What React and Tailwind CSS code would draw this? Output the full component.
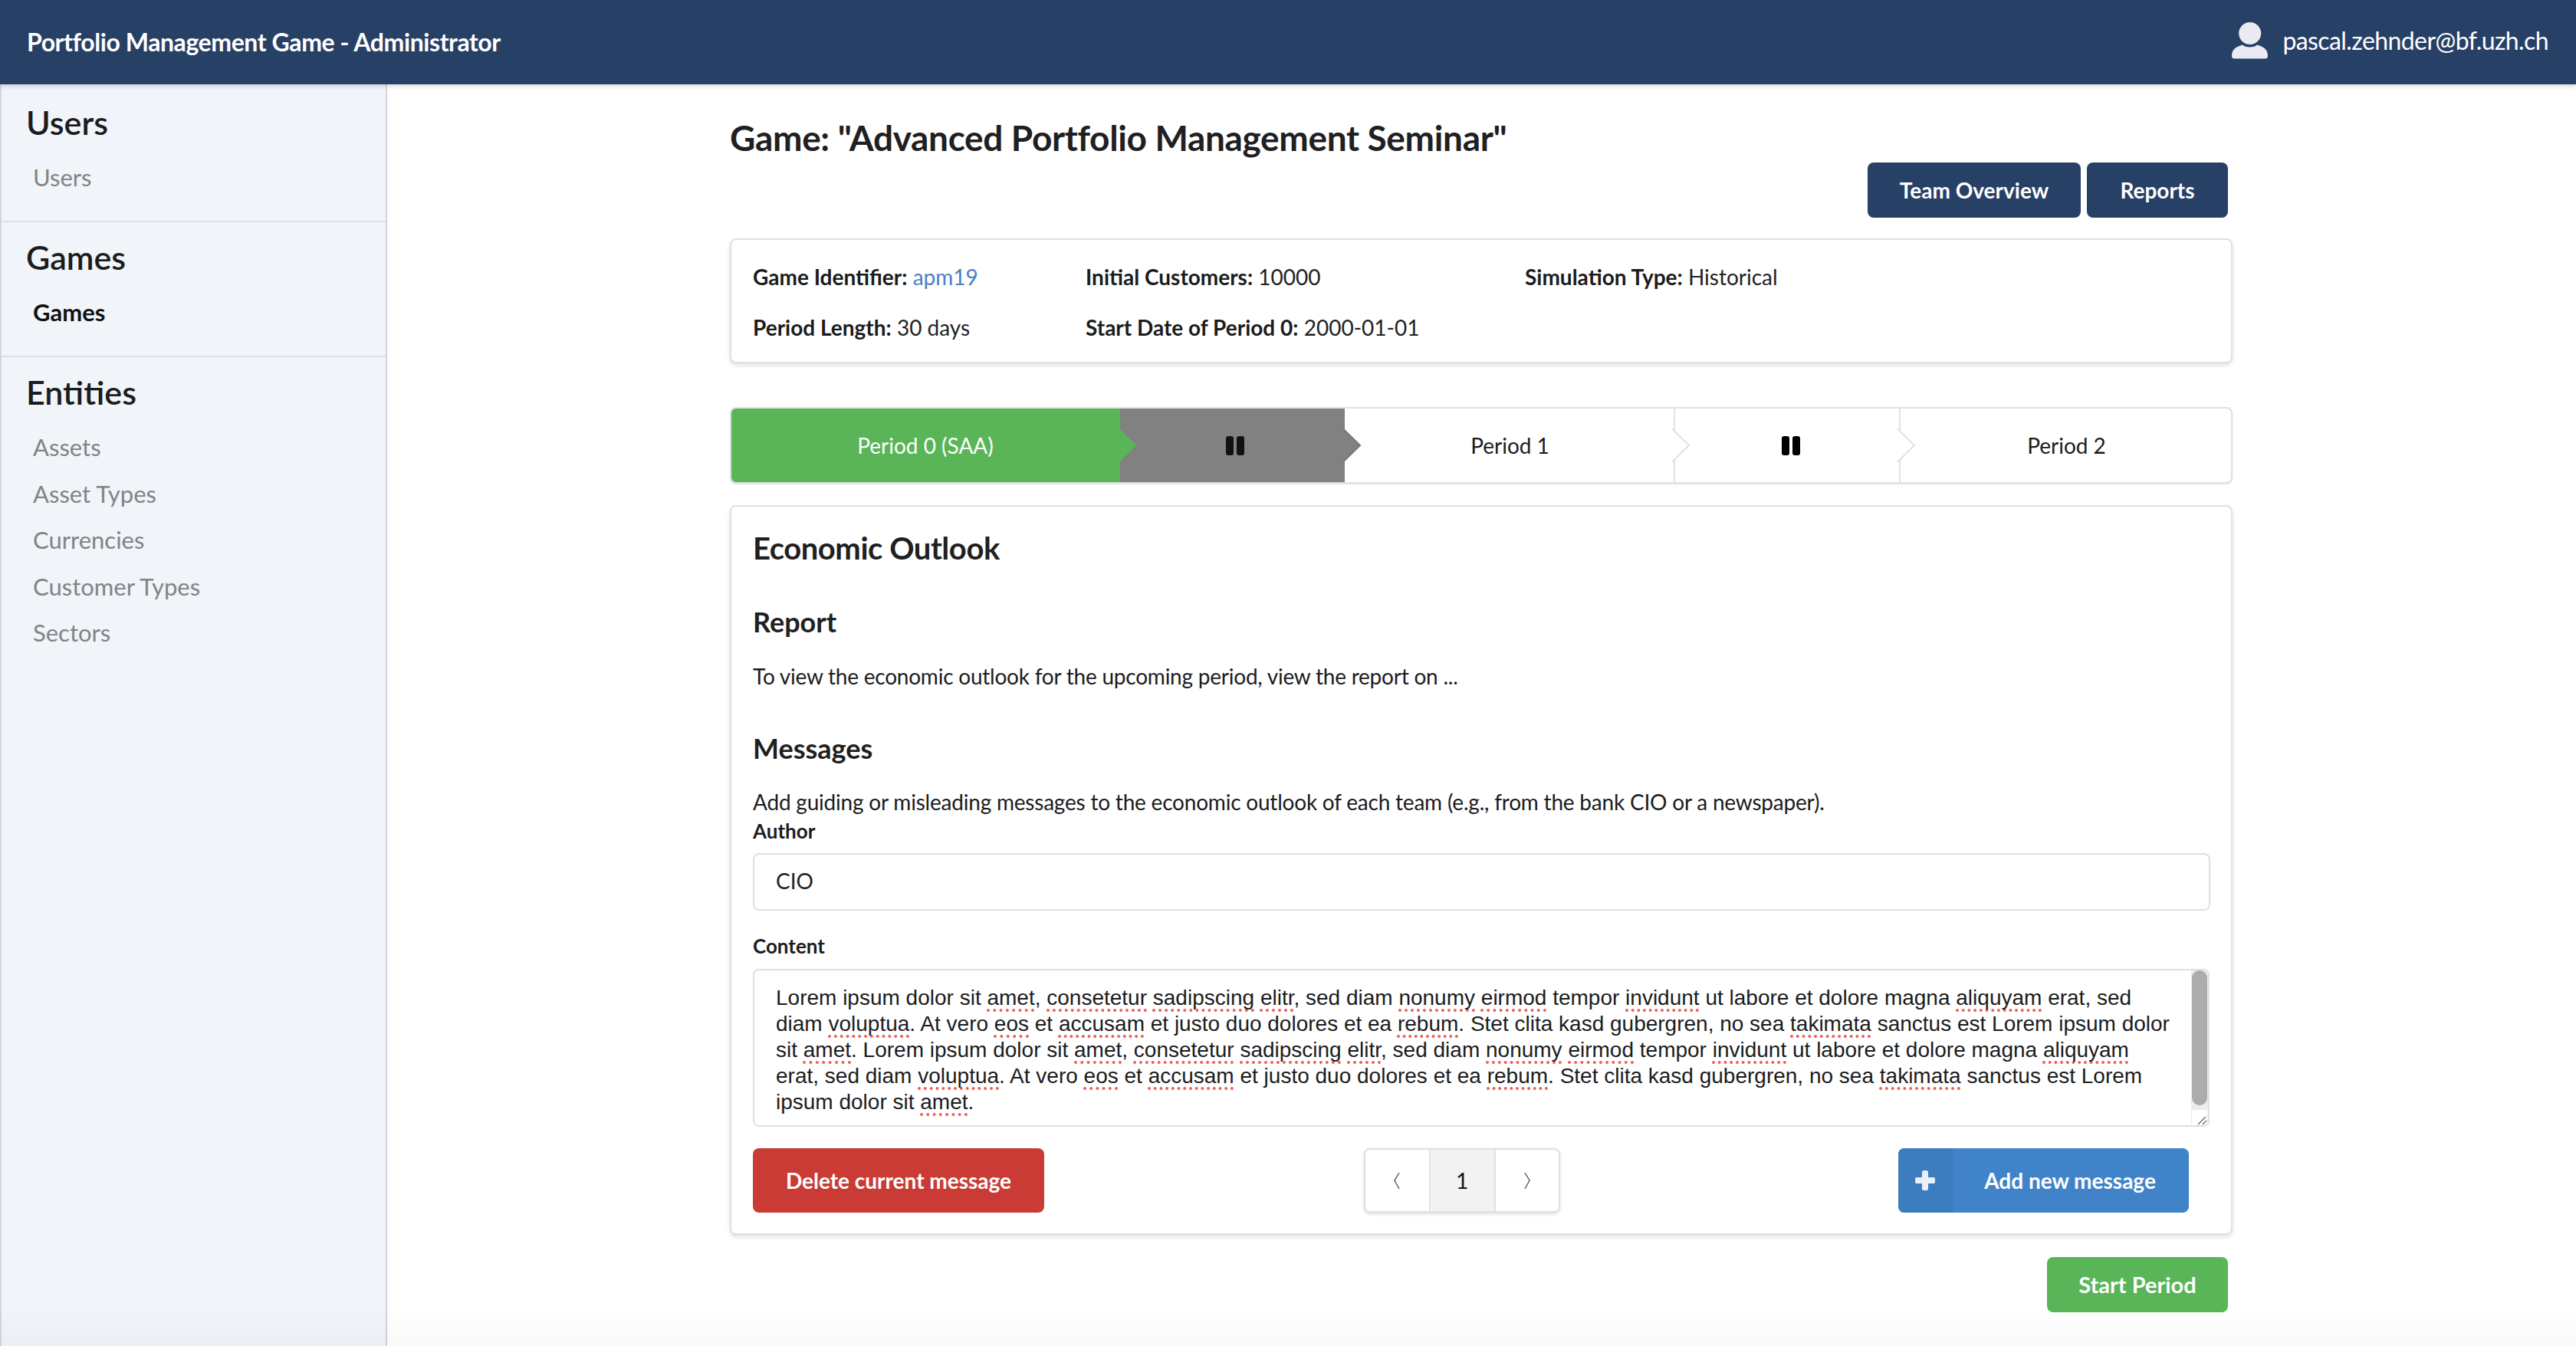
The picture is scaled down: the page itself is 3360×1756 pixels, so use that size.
const lato = "[font-family:Lato,sans-serif]";
function Err({ children }) {
  return <span className="underline decoration-dotted decoration-[#ee5f58] decoration-[4px] underline-offset-[5px] [text-decoration-skip-ink:none]">{children}</span>;
}
function NavGroup({ title, items, active, border = true, first = false }) {
  return (
    <div className={`px-[32px] ${first ? "pt-[22px]" : "pt-[18px]"} ${border ? "border-b-2 border-[#dcdfe4]" : ""}`}>
      <div className="text-[43px] leading-[56px] font-semibold text-[#1b1c1d]">{title}</div>
      <div className="flex flex-col pt-[13px] pb-[26.5px]">
        {items.map((it) => (
          <div key={it} className={`pl-[9px] text-[31px] leading-[60.5px] ${active ? "font-bold text-[#111]" : "text-[#808487]"}`}>{it}</div>
        ))}
      </div>
    </div>
  );
}
function Pause({ color }) {
  return (
    <svg width="24" height="25" viewBox="0 0 24 25"><rect x="0" y="0" width="10" height="25" rx="3" fill={color} /><rect x="14" y="0" width="10" height="25" rx="3" fill={color} /></svg>
  );
}
function Step({ className, children, stroke, tipFill, line }) {
  return (
    <div className={`relative flex items-center justify-center h-full ${line ? "border-r-2 border-[#e2e2e2]" : ""} ${className}`}>
      {children}
      {tipFill && (
        <svg className="absolute left-full top-1/2 -translate-y-1/2 -ml-[3px] z-10" width="26" height="46" viewBox="0 0 26 46">
          <polygon points="0,2 2,2 23,23 2,44 0,44" fill={tipFill} />
          <polyline points="1,1.5 23,23 1,44.5" fill="none" stroke={stroke} strokeWidth="2" />
        </svg>
      )}
    </div>
  );
}
const Card = ({ className, children }) => (
  <div className={`rounded-[8px] border-2 border-[#e0e0e1] bg-white shadow-[0_3px_5px_0_rgba(34,36,38,0.13)] ${className}`}>{children}</div>
);
const Kv = ({ k, children }) => (
  <div className="text-[28px] leading-[40px] text-[#222] whitespace-nowrap"><b className="font-bold text-[#1b1c1d]">{k}</b> {children}</div>
);

export default function App() {
  return (
    <div className={`${lato} h-[1756px] w-full overflow-hidden flex flex-col bg-white relative text-[#1b1c1d]`}>
      <header className="h-[110px] shrink-0 bg-[#274066] flex items-center justify-between pl-[35px] pr-[36px] text-white shadow-[0_2px_6px_rgba(34,36,38,0.2)] relative z-20">
        <div className="text-[32px] font-bold leading-[44px] tracking-[-0.42px]">Portfolio Management Game - Administrator</div>
        <div className="flex items-center gap-[19px]">
          <svg width="47" height="48" viewBox="0 0 47 48" fill="#e9ebf0" className="-mt-[4px]">
            <circle cx="23.7" cy="14.5" r="14.5" />
            <path d="M0 44C0 35 6 32 14 29.5C17 33.5 30 33.5 33 29.5C41 32 47 35 47 44Q47 47.5 43.5 47.5H3.5Q0 47.5 0 44Z" />
          </svg>
          <div className="text-[32px] leading-[44px] mb-[5px] tracking-[-0.58px]">pascal.zehnder@bf.uzh.ch</div>
        </div>
      </header>
      <div className="flex flex-1 min-h-0">
        <aside className="w-[505px] shrink-0 bg-[#f1f4f9] border-l-2 border-r-2 border-[#d2d5db]">
          <NavGroup title="Users" items={["Users"]} first />
          <NavGroup title="Games" items={["Games"]} active />
          <NavGroup title="Entities" items={["Assets", "Asset Types", "Currencies", "Customer Types", "Sectors"]} border={false} />
        </aside>
        <main className="ml-[447px] w-[1960px] shrink-0 pt-[39px]">
          <h1 className="text-[46px] leading-[62px] font-bold text-[#1f2021] tracking-[-0.35px]">Game: "Advanced Portfolio Management Seminar"</h1>
          <div className="flex justify-end gap-[8px] pr-[6px] pt-[1px]">
            <button className="h-[72px] w-[278px] rounded-[8px] bg-[#274066] text-white text-[28px] font-bold">Team Overview</button>
            <button className="h-[72px] w-[184px] rounded-[8px] bg-[#274066] text-white text-[28px] font-bold">Reports</button>
          </div>
          <Card className="mt-[27px] h-[163px] px-[28px] pt-[28px]">
            <div className="grid grid-cols-[434px_573px_1fr] gap-y-[26px]">
              <Kv k="Game Identifier:"><span className="text-[#4a7fc4]">apm19</span></Kv>
              <Kv k="Initial Customers:">10000</Kv>
              <Kv k="Simulation Type:">Historical</Kv>
              <Kv k="Period Length:">30 days</Kv>
              <Kv k="Start Date of Period 0:">2000-01-01</Kv>
            </div>
          </Card>
          <div className="mt-[57px] h-[100px] rounded-[8px] border-2 border-[#e0e0e1] flex text-[28px] bg-white shadow-[0_1px_2px_rgba(34,36,38,0.12)]">
            <Step className="w-[507px] bg-[#59b557] text-white rounded-l-[6px]" tipFill="#59b557" stroke="#59b557"><span className="-mt-[1px] -ml-[1px]">Period 0 (SAA)</span></Step>
            <Step className="w-[293px] bg-[#818181] pl-[6px]" tipFill="#818181" stroke="#777"><Pause color="#111" /></Step>
            <Step className="w-[431px] pl-[2px] text-[#1b1c1d]" tipFill="#fff" stroke="#e2e2e2" line><span>Period 1</span></Step>
            <Step className="w-[294px] pl-[10px]" tipFill="#fff" stroke="#e2e2e2" line><Pause color="#000" /></Step>
            <Step className="w-[431px] pl-[2px] text-[#1b1c1d]"><span>Period 2</span></Step>
          </div>
          <Card className="mt-[28px] h-[952px] pl-[28px] pr-[27px] pt-[26px]">
            <h2 className="text-[40px] leading-[56px] font-bold text-[#1f2021] tracking-[-0.45px]">Economic Outlook</h2>
            <h3 className="mt-[43px] text-[36px] leading-[50px] font-bold text-[#1f2021]">Report</h3>
            <p className="mt-[26px] text-[28px] leading-[40px] tracking-[-0.23px]">To view the economic outlook for the upcoming period, view the report on ...</p>
            <h3 className="mt-[49px] text-[36px] leading-[50px] font-bold text-[#1f2021]">Messages</h3>
            <p className="mt-[25px] text-[28px] leading-[40px] tracking-[-0.21px]">Add guiding or misleading messages to the economic outlook of each team (e.g., from the bank CIO or a newspaper).</p>
            <label className="block mt-[1px] text-[26px] leading-[34px] font-bold">Author</label>
            <div className="mt-[12px] h-[75px] rounded-[8px] border-2 border-[#dfe0e1] flex items-center px-[28px] pb-[3px] text-[28px] text-[#222]">CIO</div>
            <label className="block mt-[29px] text-[26px] leading-[34px] font-bold">Content</label>
            <div className="relative mt-[13px] h-[206px] w-[1900px] rounded-[8px] border-2 border-[#dfe0e1] pl-[28px] pt-[19px] text-[28px] leading-[34px] text-[#1b1c1d] [font-family:'Liberation_Sans',sans-serif] whitespace-nowrap overflow-hidden">
              <div>Lorem ipsum dolor sit <Err>amet</Err>, <Err>consetetur</Err> <Err>sadipscing</Err> <Err>elitr</Err>, sed diam <Err>nonumy</Err> <Err>eirmod</Err> tempor <Err>invidunt</Err> ut labore et dolore magna <Err>aliquyam</Err> erat, sed</div>
              <div>diam <Err>voluptua</Err>. At vero <Err>eos</Err> et <Err>accusam</Err> et justo duo dolores et ea <Err>rebum</Err>. Stet clita kasd gubergren, no sea <Err>takimata</Err> sanctus est Lorem ipsum dolor</div>
              <div>sit <Err>amet</Err>. Lorem ipsum dolor sit <Err>amet</Err>, <Err>consetetur</Err> <Err>sadipscing</Err> <Err>elitr</Err>, sed diam <Err>nonumy</Err> <Err>eirmod</Err> tempor <Err>invidunt</Err> ut labore et dolore magna <Err>aliquyam</Err></div>
              <div>erat, sed diam <Err>voluptua</Err>. At vero <Err>eos</Err> et <Err>accusam</Err> et justo duo dolores et ea <Err>rebum</Err>. Stet clita kasd gubergren, no sea <Err>takimata</Err> sanctus est Lorem</div>
              <div>ipsum dolor sit <Err>amet</Err>.</div>
              <div className="absolute right-0 top-0 bottom-0 w-[22px] bg-[#ececec] flex flex-col items-center">
                <div className="h-[176px] rounded-full bg-[#acacac] w-[20px]" />
                <div className="mt-auto h-[20px] w-[20px] bg-white flex items-end justify-end">
                  <svg width="14" height="14" viewBox="0 0 14 14" stroke="#666" strokeWidth="1.4"><path d="M2 13L12 3M8 13L13 8" /></svg>
                </div>
              </div>
            </div>
            <div className="mt-[28px] flex items-start justify-between pr-[28px]">
              <button className="h-[84px] w-[380px] rounded-[8px] bg-[#c93b34] text-white text-[28px] font-bold">Delete current message</button>
              <div className="-ml-[25px] h-[84px] w-[256px] rounded-[8px] border-2 border-[#e0e0e1] flex shadow-[0_2px_4px_0_rgba(34,36,38,0.15)] overflow-hidden">
                <div className="w-[83px] flex items-center justify-center">
                  <svg width="10" height="24" viewBox="0 0 10 24" fill="none" stroke="#555" strokeWidth="1.4"><path d="M8 2L2 12L8 23" /></svg>
                </div>
                <div className="w-[87px] bg-[#f2f2f2] border-l-2 border-r-2 border-[#e2e2e2] flex items-center justify-center text-[28px] text-[#111]">1</div>
                <div className="flex-1 flex items-center justify-center">
                  <svg width="10" height="24" viewBox="0 0 10 24" fill="none" stroke="#555" strokeWidth="1.4"><path d="M2 2L8 12L2 23" /></svg>
                </div>
              </div>
              <button className="h-[84px] w-[379px] rounded-[8px] bg-[#4083c9] text-white text-[28px] font-bold flex overflow-hidden">
                <span className="w-[72px] h-full bg-[#3c7dbf] flex items-center justify-center pr-[3px]">
                  <svg width="26" height="26" viewBox="0 0 26 26" fill="#e8f0f9"><rect x="9" y="0" width="8" height="26" rx="2" /><rect x="0" y="9" width="26" height="8" rx="2" /></svg>
                </span>
                <span className="flex-1 h-full flex items-center justify-center pl-[1px] pr-[4px]">Add new message</span>
              </button>
            </div>
          </Card>
          <div className="mt-[29px] flex justify-end pr-[6px]">
            <button className="h-[72px] w-[236px] rounded-[8px] bg-[#59b557] text-white text-[29px] font-bold">Start Period</button>
          </div>
        </main>
      </div>
      <div className="pointer-events-none absolute left-0 right-0 bottom-0 h-[50px] bg-gradient-to-b from-transparent to-[#000]/[0.025]" />
    </div>
  );
}
